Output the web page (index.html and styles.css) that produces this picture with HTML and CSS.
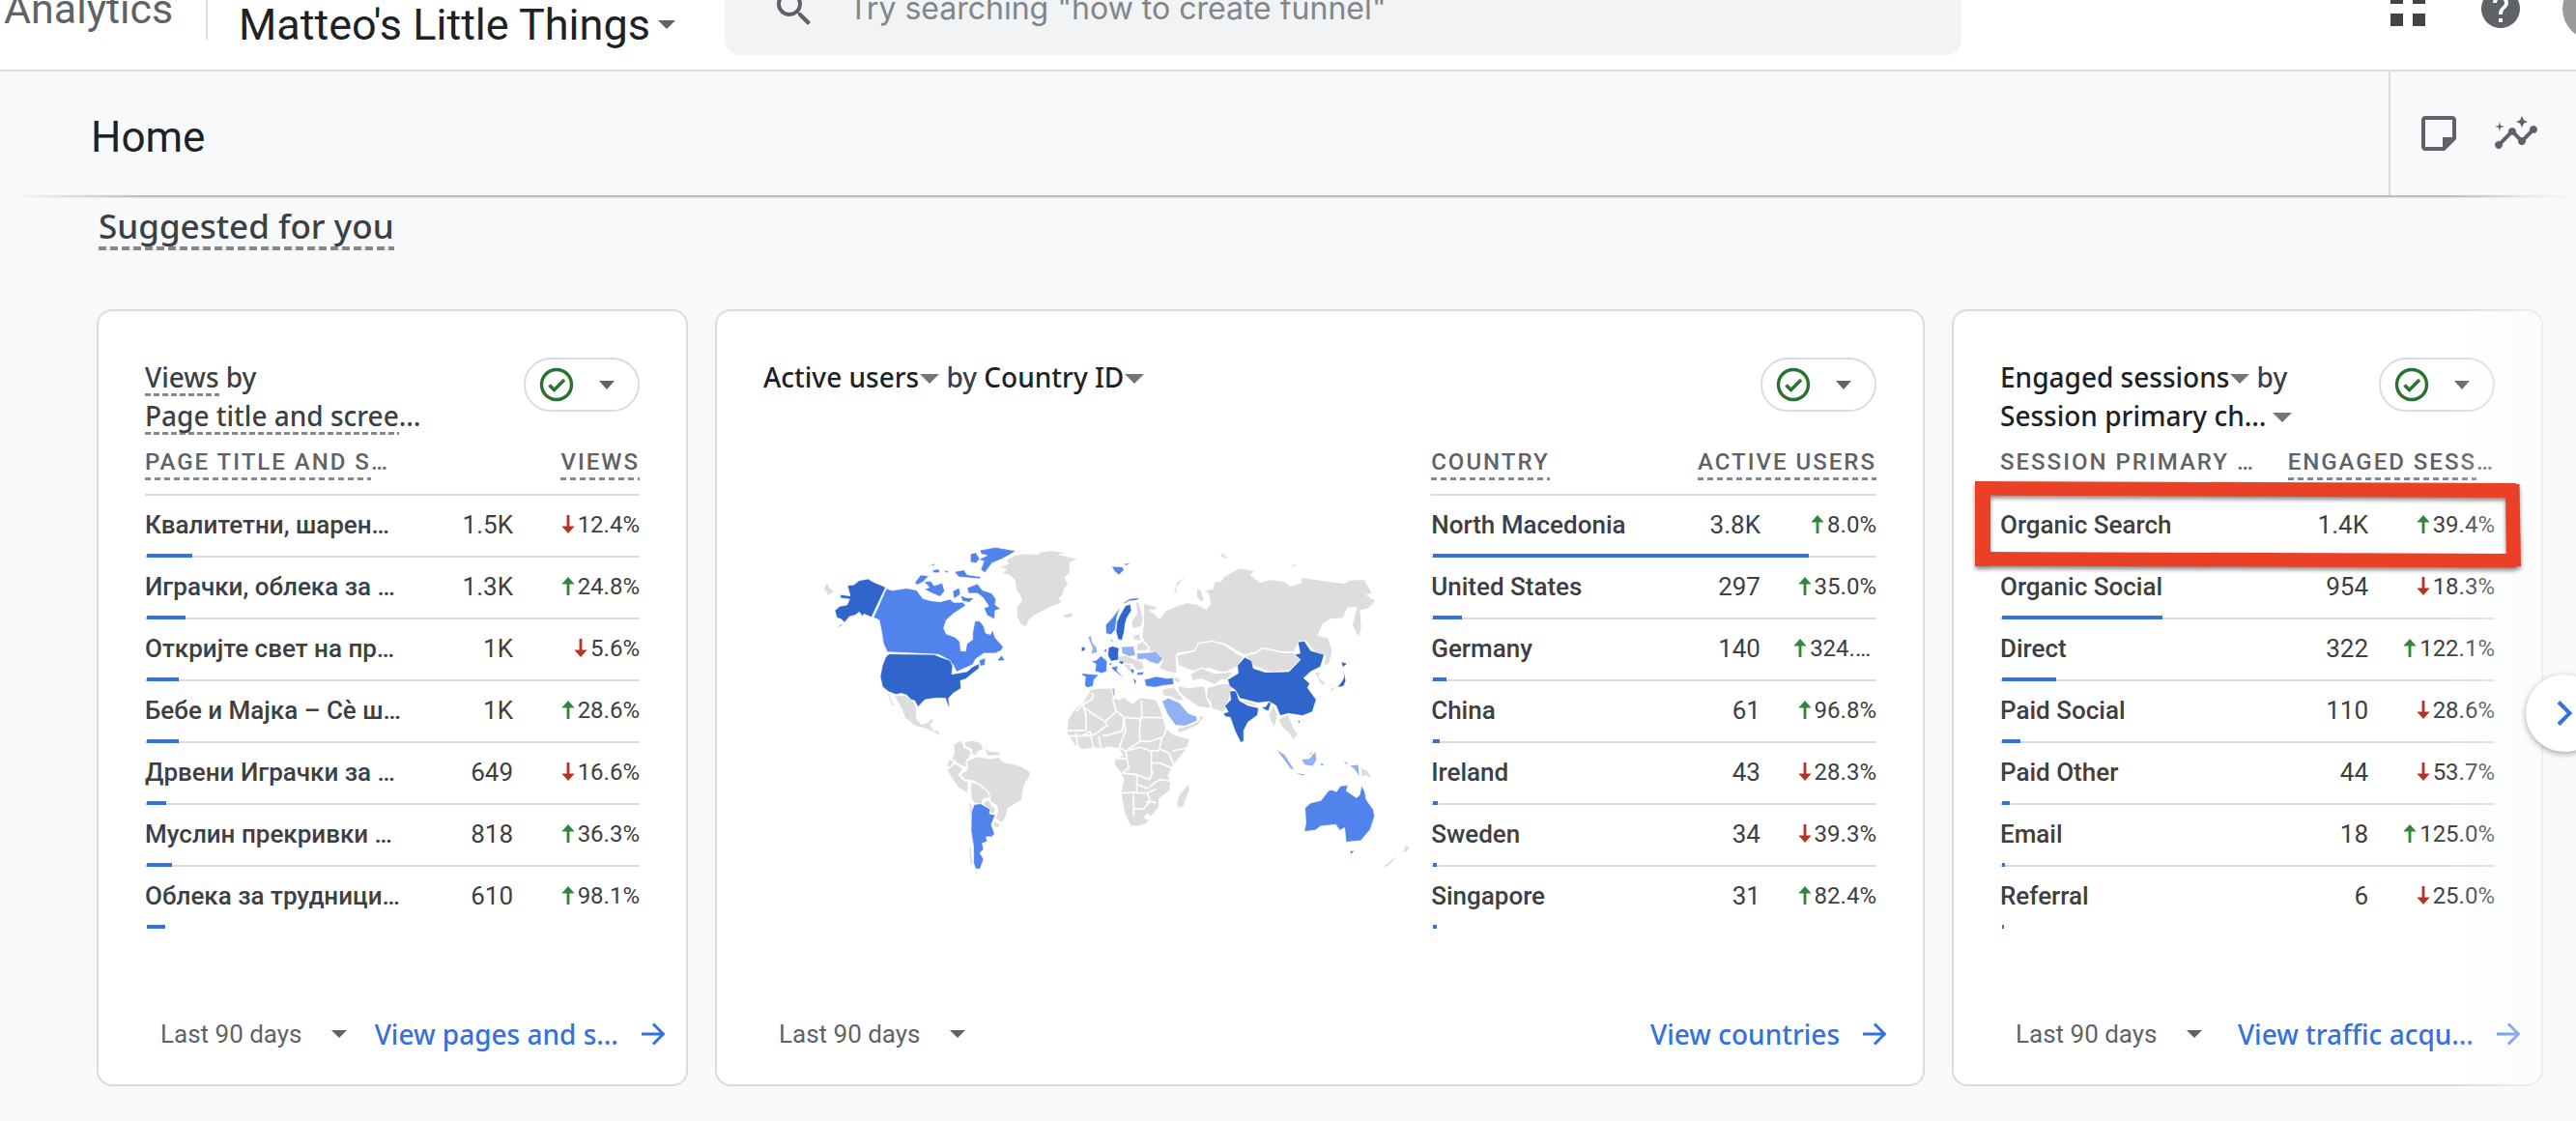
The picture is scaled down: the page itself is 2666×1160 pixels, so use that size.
FILE: index.html
```html
<!DOCTYPE html>
<html lang="en">
<head>
<meta charset="utf-8">
<title>Analytics | Home</title>
<link rel="stylesheet" href="styles.css">
</head>
<body>
<svg class="defs" aria-hidden="true">
  <symbol id="i-caret" viewBox="0 0 18 10" preserveAspectRatio="none"><path d="M0 0h18L9 10z"/></symbol>
  <symbol id="i-up" viewBox="0 0 14 20"><path d="M7 0l7 8H8.500v12h-3V8H0z"/></symbol>
  <symbol id="i-down" viewBox="0 0 14 20"><path d="M7 20l7-8H8.500V0h-3v12H0z"/></symbol>
  <symbol id="i-arrow" viewBox="0 0 24 24"><path d="M0 12h22M12 1.500L22.500 12 12 22.500" fill="none" stroke="currentColor" stroke-width="3"/></symbol>
  <symbol id="i-check" viewBox="0 0 36 36"><circle cx="18" cy="18" r="15.500" fill="none" stroke="currentColor" stroke-width="3.400"/><path d="M10.500 18.500l5 5L26 13" fill="none" stroke="currentColor" stroke-width="3.400"/></symbol>
</svg>

<header class="topbar">
  <a class="brand" href="#">Analytics</a>
  <button class="property" type="button">Matteo's Little Things<svg class="caret"><use href="#i-caret"/></svg></button>
  <form class="search" role="search">
    <svg class="icon" viewBox="0 0 24 24"><path d="M15.500 14h-.79l-.28-.27A6.470 6.470 0 0 0 16 9.500 6.500 6.500 0 1 0 9.500 16c1.610 0 3.090-.59 4.230-1.570l.27.28v.79l5 4.990L20.490 19l-4.990-5zm-6 0C7.010 14 5 11.990 5 9.500S7.010 5 9.500 5 14 7.010 14 9.500 11.990 14 9.500 14z"/></svg>
    <input type="text" aria-label="Search" placeholder='Try searching "how to create funnel"'>
  </form>
  <nav class="tools">
    <button type="button" aria-label="Apps"><svg class="apps" viewBox="0 0 36 36"><path d="M0 0h13v13H0zM23 0h13v13H23zM0 23h13v13H0zM23 23h13v13H23z"/></svg></button>
    <button type="button" aria-label="Help"><svg class="icon" viewBox="0 0 24 24"><path d="M12 2C6.480 2 2 6.480 2 12s4.480 10 10 10 10-4.480 10-10S17.520 2 12 2zm1 17h-2v-2h2v2zm2.070-7.750l-.9.920C13.450 12.900 13 13.500 13 15h-2v-.5c0-1.100.45-2.100 1.170-2.830l1.240-1.260c.37-.36.590-.86.590-1.410 0-1.100-.9-2-2-2s-2 .9-2 2H8c0-2.210 1.790-4 4-4s4 1.790 4 4c0 .88-.36 1.680-.93 2.250z"/></svg></button>
    <button class="avatar" type="button" aria-label="Account"></button>
  </nav>
</header>

<div class="subbar">
  <h1>Home</h1>
  <div class="subtools">
    <button type="button" aria-label="Notes"><svg class="icon" viewBox="0 0 24 24"><path d="M19 5v9h-5v5H5V5h14m0-2H5c-1.100 0-2 .9-2 2v14c0 1.100.9 2 2 2h10l6-6V5c0-1.100-.9-2-2-2z"/></svg></button>
    <button type="button" aria-label="Insights"><svg class="icon" viewBox="0 0 24 24"><path d="M21 8c-1.450 0-2.260 1.440-1.930 2.510l-3.550 3.560c-.3-.09-.74-.09-1.040 0l-2.550-2.550C12.270 10.450 11.460 9 10 9c-1.450 0-2.270 1.440-1.930 2.520l-4.560 4.550C2.440 15.740 1 16.550 1 18c0 1.100.9 2 2 2 1.450 0 2.260-1.440 1.930-2.510l4.550-4.560c.3.09.74.09 1.040 0l2.550 2.550C12.730 16.550 13.540 18 15 18c1.450 0 2.270-1.440 1.930-2.520l3.560-3.550C21.560 12.260 23 11.450 23 10c0-1.100-.9-2-2-2z"/><path d="M15 9l.94-2.070L18 6l-2.060-.93L15 3l-.92 2.070L12 6l2.080.93zM3.500 11L4 9l2-.5L4 8l-.5-2L3 8l-2 .5L3 9z"/></svg></button>
  </div>
</div>

<main>
  <h2><span class="dashed">Suggested for you</span></h2>
  <div class="cards">

    <section class="card">
      <div class="card-head">
        <h3><span class="dashed">Views</span> by<br><span class="dashed">Page title and scree</span>…</h3>
        <button class="status" type="button" aria-label="Data quality"><svg class="check"><use href="#i-check"/></svg><svg class="caret"><use href="#i-caret"/></svg></button>
      </div>
      <table>
        <thead><tr><th><span class="dashed">PAGE TITLE AND S</span>…</th><th colspan="2"><span class="dashed">VIEWS</span></th></tr></thead>
        <tbody>
          <tr><td>Квалитетни, шарен…<i class="bar" style="width:9.2%"></i></td><td>1.5K</td><td class="down"><svg><use href="#i-down"/></svg>12.4%</td></tr>
          <tr><td>Играчки, облека за …<i class="bar" style="width:7.8%"></i></td><td>1.3K</td><td class="up"><svg><use href="#i-up"/></svg>24.8%</td></tr>
          <tr><td>Откријте свет на пр…<i class="bar" style="width:6.4%"></i></td><td>1K</td><td class="down"><svg><use href="#i-down"/></svg>5.6%</td></tr>
          <tr><td>Бебе и Мајка – Сѐ ш…<i class="bar" style="width:6.4%"></i></td><td>1K</td><td class="up"><svg><use href="#i-up"/></svg>28.6%</td></tr>
          <tr><td>Дрвени Играчки за …<i class="bar" style="width:3.9%"></i></td><td>649</td><td class="down"><svg><use href="#i-down"/></svg>16.6%</td></tr>
          <tr><td>Муслин прекривки …<i class="bar" style="width:5.1%"></i></td><td>818</td><td class="up"><svg><use href="#i-up"/></svg>36.3%</td></tr>
          <tr><td>Облека за трудници…<i class="bar" style="width:3.7%"></i></td><td>610</td><td class="up"><svg><use href="#i-up"/></svg>98.1%</td></tr>
        </tbody>
      </table>
      <footer>
        <label class="range"><select aria-label="Date range"><option>Last 90 days</option></select><svg class="caret"><use href="#i-caret"/></svg></label>
        <a href="#">View pages and s…<svg><use href="#i-arrow"/></svg></a>
      </footer>
    </section>

    <section class="card wide">
      <div class="card-head">
        <h3><button type="button">Active users<svg class="caret"><use href="#i-caret"/></svg></button> by <button type="button">Country ID<svg class="caret"><use href="#i-caret"/></svg></button></h3>
        <button class="status" type="button" aria-label="Data quality"><svg class="check"><use href="#i-check"/></svg><svg class="caret"><use href="#i-caret"/></svg></button>
      </div>
      <div class="split">
        <svg class="map" viewBox="-120 0 2074 1140" role="img" aria-label="Active users by country">
          <g class="land">
            <path d="M66 208L78 185 88 205 102 215 96 220 82 232z"/>
            <path d="M610 140L640 130 632 118 665 102 690 98 735 100 738 93 780 88 825 97 800 101 860 115 833 127 832 158 818 172 828 195 815 208 812 225 798 240 812 246 795 258 770 265 745 280 720 292 705 305 697 328 680 320 668 297 665 265 682 245 675 225 665 215 660 180 640 165 615 160 635 150z"/>
            <path d="M808 283L815 287 835 280 845 290 828 300 812 297z"/>
            <path d="M285 540L320 538 345 553 355 575 357 612 372 628 390 622 398 612 413 614 400 630 410 648 425 645 430 668 412 655 388 645 378 641 350 634 320 610 308 580 295 558z"/>
            <path class="thin" d="M268 533l8 22 10 16"/>
            <path d="M470 690L495 677 505 700 525 712 522 730 510 745 512 765 490 755 465 738 472 715z"/>
            <path d="M505 682L530 678 555 685 565 705 545 715 548 725 528 722 525 705 506 698z"/>
            <path d="M565 700L585 712 612 713 620 727 600 727 575 728z"/>
            <path d="M455 738L475 742 460 764 450 758z"/>
            <path d="M450 770L475 750 502 766 488 785 500 800 517 806 515 845 485 825 465 797z"/>
            <path d="M512 740L548 728 580 735 613 730 625 745 650 750 680 758 708 775 710 785 690 820 682 865 640 890 632 922 618 936 600 920 608 900 605 882 585 870 580 848 560 820 535 806 505 800 490 785 512 770z"/>
            <path d="M522 808L545 812 575 835 585 855 563 862 558 876 535 875 525 860z"/>
            <path d="M563 868L580 862 590 880 605 895 592 908 570 890z"/>
            <path d="M595 925L615 938 612 950 595 948z"/>
            <path d="M518 860L530 883 524 920 524 1000 532 1070 558 1104 540 1092 522 1060 518 1020 523 980z"/>
          </g>
          <g class="c3"><path d="M535 878L555 875 585 893 582 906 600 910 588 940 598 968 590 978 572 978 575 993 560 998 564 1018 552 1028 564 1047 553 1078 540 1078 533 1060 533 1010 525 960 526 900z"/></g>
          <g class="c3">
            <path d="M262 207L280 213 325 206 356 212 375 238 400 245 430 248 460 240 470 250 500 250 508 260 470 285 448 305 440 330 448 348 475 358 490 372 493 400 508 402 512 378 530 366 530 345 537 308 552 308 565 325 570 345 585 350 592 335 600 360 625 388 618 400 600 408 565 408 540 425 530 443 480 466 470 445 455 428 425 412 265 404 253 378 248 345 240 305 222 297z"/>
            <path d="M553 448L550 430 570 422 568 445zM608 428l12-14 10 16-16 2z"/>
            <path d="M553 88L600 79 665 90 640 105 615 118 590 128 568 158 555 148 565 122 548 118 575 104 556 100z"/>
            <path d="M523 100L540 95 552 115 540 128 523 125z"/>
            <path d="M350 190L368 165 394 168 375 187 358 196z"/>
            <path d="M378 186L400 184 410 198 436 190 443 215 428 232 405 222 380 210 396 203z"/>
            <path d="M513 205L525 200 545 192 560 212 590 222 602 240 600 258 617 270 600 275 598 302 575 290 565 268 580 262 562 235 545 222 517 222z"/>
            <path d="M405 150l20-4 3 12-20 0zM392 138l22-10-4 8zM473 155l30-6 10 15 44 7-4 6-66-6zM468 215l20-10 4 20-20 14zM492 228l20 8 22 0-14 14-22-4zM440 150l15 2-6 8z"/>
          </g>
          <g class="c4">
            <path d="M141 197L160 196 178 182 205 177 222 187 260 203 216 296 192 286 188 294 178 280 165 290 148 294 132 312 122 302 108 298 102 275 118 262 140 258 148 240 118 236 120 226 150 230z"/>
            <path d="M106 328l24-14-10 10z"/>
            <path d="M270 410L410 412 438 423 460 430 468 448 465 473 512 465 530 450 550 440 550 455 530 470 508 488 492 493 494 517 470 532 455 548 459 580 450 562 446 548 420 547 395 550 382 552 360 575 350 555 338 552 325 538 310 533 290 536 268 527 250 512 243 480 250 445 260 420z"/>
          </g>
          <g transform="translate(810 0)">
            <g class="land">
              <path d="M250 252L290 262 295 272 270 275 285 285 300 300 320 275 350 262 385 250 415 255 430 262 445 270 458 255 452 225 440 212 465 208 470 185 490 185 500 170 520 158 550 143 598 152 585 165 612 187 645 178 690 185 705 198 738 190 740 172 800 180 830 185 875 190 890 180 938 178 950 200 962 222 945 228 974 245 950 270 925 276 928 330 920 362 898 322 912 265 885 268 870 300 830 303 808 318 793 352 825 360 838 400 828 440 810 450 815 415 785 410 755 370 735 370 718 405 680 405 620 392 600 405 565 415 500 378 460 372 420 378 410 400 356 408 352 430 355 472 320 465 298 455 312 425 270 402 262 385 245 360 250 320z"/>
              <path d="M343 215L355 185 397 162 370 185 353 205 357 225zM485 100l12-3 22 20-22-4zM704 135l16-5 14 4-20 6zM415 205l15 5 10 35-10 5-15-15z"/>
              <path d="M225 245L238 252 250 300 245 325 215 332 212 308 230 285z"/>
              <path d="M216 352l24-6 4 24-22-2z"/>
              <path d="M230 380L248 370 268 390 260 400 228 400z"/>
              <path d="M170 418l20-6 30 12 28 10 6 22-22 8-18-22-20 0-20-10z"/>
              <path d="M188 440l22 4 8 22-8 4-20-22z"/>
              <path d="M352 415L410 400 420 378 462 370 500 380 540 408 562 418 545 450 500 470 455 455 415 465 385 458 360 447z"/>
              <path d="M395 472L430 453 470 470 530 465 512 490 490 492 470 507 430 488 402 495z"/>
              <path d="M343 480l20 4 2 20-18-10z"/>
              <path d="M355 508L390 515 440 508 448 545 462 580 420 575 385 550 360 530z"/>
              <path d="M308 520L345 512 378 555 355 555 340 545 310 540z"/>
              <path d="M448 515L490 503 530 500 520 545 500 592 462 580 458 560 445 545z"/>
              <path d="M353 640L392 632 425 615 420 600 440 605 420 632 360 658z"/>
              <path d="M563 415L600 408 620 392 680 405 715 406 738 428 705 462 645 467 590 447z"/>
              <path d="M782 468l18-4-3 20 14 10 6 18-18-10z"/>
              <path d="M638 600L655 568 668 600 658 642 645 620z"/>
              <path d="M668 612L700 598 718 640 732 660 715 678 700 655 680 638z"/>
              <path d="M560 552l42 14 0 8-42-12z"/>
              <path d="M690 706l12 6 2 14zM753 730l28-26-6 20zM798 628l6 12-4 6zM825 688l6-4 0 12zM570 686l5 4-1 8z"/>
              <path d="M925 762L948 772 963 802 945 790 926 792z"/>
              <path d="M85 522L100 517 150 515 158 545 175 552 190 543 215 563 240 545 290 552 303 578 322 642 345 660 395 675 385 705 345 755 328 785 335 810 333 835 300 860 300 885 280 908 260 938 235 945 210 945 192 908 180 845 188 800 180 780 160 755 162 735 185 725 175 705 140 700 120 705 100 702 60 708 35 692 12 655 15 615 35 582 62 560z"/>
              <path d="M390 812L395 830 375 885 358 890 353 870 362 845z"/>
              <path class="solid" d="M998 1068L1040 1035 1020 1058 1004 1072zM1058 1022l8-18 10 8-12 14z"/>
            </g>
            <path class="borders" d="M93 530L92 550 62 567 40 590M62 567L72 600 72 648 15 648M62 575L130 620 138 632 100 660 62 665M155 545L165 590 132 620M163 585L190 607 185 650 130 665 122 660M190 607L245 612 245 555M245 607L315 608M242 612L238 655 240 682 195 712 175 700M190 607L195 650 175 700M238 680L270 682 312 668 322 642M308 668L300 705 330 718 345 755M340 712L392 700M300 710L275 712 240 700 195 712M195 712L205 765 185 780M165 735l35 0M275 712L275 780M185 780L230 785 270 800 280 775M275 748L305 750 340 765M230 785L230 840 180 842M230 815L262 828 300 800 335 805M220 845L220 915M230 842L262 842 290 830M258 870L272 868 290 872M220 890L250 892 272 868M262 842l10 26M40 655L48 700M60 665L85 650 95 705M112 665L118 705M15 665l45 0"/>
            <circle class="hole" cx="263" cy="916" r="9"/>
            <g class="c4">
              <path d="M195 260L210 256 213 275 198 300 193 320 191 340 184 368 172 365 165 340 168 310 180 285z"/>
              <path d="M142 390L155 386 175 392 172 410 174 428 150 433 140 415zM128 398l10-4-5 14z"/>
              <path d="M58 388l12 2-2 10-10 2zM174 433l16-2-4 12-10-4zM208 455l14 5-4 14zM218 486l10 6-2 18zM142 439l12 0-6 8z"/>
              <path d="M512 490L545 470 542 447 565 420 587 432 592 455 630 467 702 465 738 428 720 412 737 408 730 373 750 370 770 400 812 412 800 450 770 465 748 485 767 502 760 515 787 552 775 590 745 602 700 595 675 602 662 570 640 558 605 562 550 548 535 522 518 510z"/>
              <path d="M518 525L538 525 548 555 575 570 608 578 605 600 575 622 562 648 562 680 553 686 535 650 520 607 505 605 498 595 514 590 503 572 522 552zM617 577l14-4 8-14 8 4-8 24-8-2z"/>
              <path class="solid" d="M730 618l6 0-2 6zM866 436l16 4-12 10zM872 463l6 30-6 16-18 5 14-20 6-10zM832 524l18-14-14 12z"/>
            </g>
            <g class="c3">
              <path d="M178 265L168 295 163 335 150 350 134 347 133 320 152 300zM190 250l20-12 32-2-14 8-22 2-14 8zM152 138l34 2 4 10-16 15-14-12zM188 130l24-2-16 8z"/>
              <path d="M88 432L104 430 118 416 138 432 136 465 120 470 100 464 103 442z"/>
              <path d="M60 470L112 475 97 490 94 510 76 515 68 508 70 480 60 478z"/>
              <path d="M148 452L172 447 168 462 192 487 182 480 162 464z"/>
              <path d="M230 468l24-3-6 10-16 2zM148 366l6-2 0 12z"/>
              <path d="M253 490L290 480 325 486 342 484 345 505 315 508 285 514 258 510z"/>
              <path d="M750 962L755 935 752 888 770 873 802 865 825 835 835 832 850 838 862 820 886 818 880 835 912 857 922 848 928 818 938 838 942 862 965 895 968 915 955 955 925 990 900 992 880 995 875 950 860 958 848 940 800 945 785 957z"/>
              <path d="M892 1022l14-2-12 14z"/>
            </g>
            <g class="c2">
              <path d="M78 358L88 353 92 375 105 390 107 406 87 410 92 392z"/>
              <path d="M182 388L220 386 226 415 205 418 184 408z"/>
              <path d="M230 408L265 406 288 402 312 425 295 442 270 435 258 426 230 428z"/>
              <path d="M153 517l8 0 0 20 4 8-10-8z"/>
              <path d="M308 557L328 547 362 562 390 595 415 604 417 598 417 618 380 634 350 632 325 598z"/>
              <path class="solid" d="M665 708L690 725 718 770 707 766 690 742zM742 738l24-2 18-22 4 24-12 20-24-4zM893 757l24-2 4 34-16-22zM800 748l12 6-10 4zM725 780l30 5-14 2zM872 744l14 4-6 4z"/>
            </g>
          </g>
        </svg>
        <table>
          <thead><tr><th><span class="dashed">COUNTRY</span></th><th colspan="2"><span class="dashed">ACTIVE USERS</span></th></tr></thead>
          <tbody>
            <tr><td>North Macedonia<i class="bar" style="width:84.3%"></i></td><td>3.8K</td><td class="up"><svg><use href="#i-up"/></svg>8.0%</td></tr>
            <tr><td>United States<i class="bar" style="width:6.5%"></i></td><td>297</td><td class="up"><svg><use href="#i-up"/></svg>35.0%</td></tr>
            <tr><td>Germany<i class="bar" style="width:3.1%"></i></td><td>140</td><td class="up clipped"><svg><use href="#i-up"/></svg>324.…</td></tr>
            <tr><td>China<i class="bar" style="width:1.5%"></i></td><td>61</td><td class="up"><svg><use href="#i-up"/></svg>96.8%</td></tr>
            <tr><td>Ireland<i class="bar" style="width:1.1%"></i></td><td>43</td><td class="down"><svg><use href="#i-down"/></svg>28.3%</td></tr>
            <tr><td>Sweden<i class="bar" style="width:0.9%"></i></td><td>34</td><td class="down"><svg><use href="#i-down"/></svg>39.3%</td></tr>
            <tr><td>Singapore<i class="bar" style="width:0.9%"></i></td><td>31</td><td class="up"><svg><use href="#i-up"/></svg>82.4%</td></tr>
          </tbody>
        </table>
      </div>
      <footer>
        <label class="range"><select aria-label="Date range"><option>Last 90 days</option></select><svg class="caret"><use href="#i-caret"/></svg></label>
        <a href="#">View countries<svg><use href="#i-arrow"/></svg></a>
      </footer>
    </section>

    <section class="card">
      <div class="card-head">
        <h3><button type="button">Engaged sessions<svg class="caret"><use href="#i-caret"/></svg></button> by<br><button type="button">Session primary ch…<svg class="caret apart"><use href="#i-caret"/></svg></button></h3>
        <button class="status" type="button" aria-label="Data quality"><svg class="check"><use href="#i-check"/></svg><svg class="caret"><use href="#i-caret"/></svg></button>
      </div>
      <table>
        <thead><tr><th>SESSION PRIMARY …</th><th colspan="2"><span class="dashed">ENGAGED SESS</span>…</th></tr></thead>
        <tbody>
          <tr><td>Organic Search<i class="bar" style="width:48%"></i></td><td>1.4K</td><td class="up"><svg><use href="#i-up"/></svg>39.4%</td></tr>
          <tr><td>Organic Social<i class="bar" style="width:32.5%"></i></td><td>954</td><td class="down"><svg><use href="#i-down"/></svg>18.3%</td></tr>
          <tr><td>Direct<i class="bar" style="width:11%"></i></td><td>322</td><td class="up"><svg><use href="#i-up"/></svg>122.1%</td></tr>
          <tr><td>Paid Social<i class="bar" style="width:3.7%"></i></td><td>110</td><td class="down"><svg><use href="#i-down"/></svg>28.6%</td></tr>
          <tr><td>Paid Other<i class="bar" style="width:1.6%"></i></td><td>44</td><td class="down"><svg><use href="#i-down"/></svg>53.7%</td></tr>
          <tr><td>Email<i class="bar" style="width:0.6%"></i></td><td>18</td><td class="up"><svg><use href="#i-up"/></svg>125.0%</td></tr>
          <tr><td>Referral<i class="bar" style="width:0.3%"></i></td><td>6</td><td class="down"><svg><use href="#i-down"/></svg>25.0%</td></tr>
        </tbody>
      </table>
      <footer>
        <label class="range"><select aria-label="Date range"><option>Last 90 days</option></select><svg class="caret"><use href="#i-caret"/></svg></label>
        <a href="#">View traffic acqu…<svg><use href="#i-arrow"/></svg></a>
      </footer>
    </section>
  </div>
  <div class="fade"></div>
  <svg class="callout" viewBox="0 0 566 92" aria-hidden="true">
    <path d="M0 0L16 0V88H0z"/>
    <path d="M0 0L560 2V17L0 14.500z"/>
    <path d="M0 73L560 75V89.500L0 87.500z"/>
    <path d="M549 3H563.500L565 88H550z"/>
  </svg>
  <button class="next" type="button" aria-label="Next"><svg viewBox="0 0 16 26"><path d="M2 1.500L13.500 13 2 24.500" fill="none" stroke="currentColor" stroke-width="4"/></svg></button>
</main>
</body>
</html>
```
FILE: styles.css
```css
* { box-sizing: border-box; }
body {
  margin: 0;
  background: #f8f9fb;
  color: #3c4043;
  font-family: Roboto, "Liberation Sans", sans-serif;
  font-size: 26px;
  overflow-x: hidden;
}
h1, h2, h3 { margin: 0; font-weight: 400; }
button { border: 0; padding: 0; background: none; font: inherit; color: inherit; }
svg { fill: currentColor; display: block; }
a { text-decoration: none; }
.defs { position: absolute; width: 0; height: 0; }
.icon { width: 48px; height: 48px; }
.caret { width: 18px; height: 9px; }

.dashed {
  padding-bottom: 1px;
  background: repeating-linear-gradient(90deg, #85898e 0 6px, transparent 6px 9px) left bottom / 100% 3px no-repeat;
}

/* Top bar, scrolled partly out of view */
.topbar {
  display: flex;
  align-items: center;
  height: 128px;
  margin-top: -54px;
  background: #fff;
  border-bottom: 2px solid #dadce0;
  overflow: hidden;
}
.brand {
  width: 215px;
  padding-left: 4px;
  line-height: 64px;
  font-size: 43px;
  color: #5f6368;
  border-right: 2px solid #dadce0;
}
.property {
  display: flex;
  align-items: center;
  gap: 8px;
  width: 535px;
  padding: 32px 0 0 32px;
  font-size: 45px;
  color: #202124;
  white-space: nowrap;
}
.property .caret { color: #5f6368; }
.search {
  display: flex;
  align-items: center;
  gap: 32px;
  width: 48%;
  height: 96px;
  padding: 0 48px;
  border-radius: 16px;
  background: #f1f3f4;
  color: #5f6368;
}
.search input {
  flex: 1;
  border: 0;
  padding: 0;
  background: none;
  font: 400 32px/48px Inter, "Liberation Sans", sans-serif;
}
.search input::placeholder { color: #80868b; opacity: 1; }
.tools {
  display: flex;
  align-items: center;
  gap: 54px;
  margin: 0 -50px 0 auto;
  color: #5f6368;
}
.apps { width: 36px; height: 36px; color: #444; }
.avatar {
  width: 64px;
  height: 64px;
  margin-left: -14px;
  border-radius: 50%;
  background: #9b9b9b;
}

.subbar {
  position: relative;
  display: flex;
  justify-content: space-between;
  height: 128px;
}
.subbar::after {
  content: "";
  position: absolute;
  inset: auto 0 -3px;
  height: 3px;
  background: linear-gradient(#b5b8b9, #c6c8ca 60%, #eceef0);
  mask-image: linear-gradient(90deg, transparent 12px, #000 140px calc(100% - 90px), rgba(0, 0, 0, .25));
}
.subbar h1 {
  padding: 4px 0 0 94px;
  line-height: 128px;
  font-size: 44px;
  color: #202124;
}
.subtools {
  display: flex;
  align-items: center;
  gap: 32px;
  padding: 0 38px 0 26px;
  border-left: 2px solid #dadce0;
  color: #5f6368;
}

main { position: relative; padding: 8px 34px 36px 100px; }
h2 {
  padding-left: 2px;
  font: 500 35px/48px "Noto Sans", "Liberation Sans", sans-serif;
}
h2 .dashed {
  display: inline-block;
  background: repeating-linear-gradient(90deg, #85898e 0 8px, transparent 8px 12px) left bottom / 100% 4px no-repeat;
}

.cards {
  display: grid;
  grid-template-columns: repeat(4, 1fr);
  gap: 28px;
  margin-top: 61px;
}
.card {
  display: flex;
  flex-direction: column;
  min-height: 804px;
  padding: 48px 48px 28px;
  background: #fff;
  border: 2px solid #dadce0;
  border-radius: 16px;
}
.wide { grid-column: span 2; }
.card-head {
  display: flex;
  justify-content: space-between;
  align-items: flex-start;
  height: 80px;
}
h3 {
  font: 500 28px/40px "Noto Sans", "Liberation Sans", sans-serif;
  white-space: nowrap;
}
h3 button { color: #202124; }
h3 .caret { display: inline-block; width: 20px; height: 10px; margin-left: 1px; vertical-align: 4px; color: #757575; }
h3 .apart { margin-left: 7px; }
.status {
  display: flex;
  align-items: center;
  gap: 26px;
  width: 120px;
  height: 56px;
  padding-left: 14px;
  border: 2px solid #dadce0;
  border-radius: 28px;
  color: #5f6368;
}
.status .caret { width: 16px; }
.check { width: 36px; height: 36px; color: #2a7230; }

.split { display: grid; grid-template-columns: 3fr 2fr; align-items: start; }
.map { width: 100%; padding-top: 90px; }
.map path { stroke: #fff; stroke-width: 4; stroke-linejoin: round; }
.map .land { fill: #ddd; }
.map .c2 { fill: #91b1f2; }
.map .c3 { fill: #5183ec; }
.map .c4 { fill: #3065cb; }
.map .c2 path, .map .c3 path, .map .c4 path { stroke-width: 2; }
.map .borders { fill: none; stroke-width: 5; }
.map .hole { fill: #fff; }
.map .thin { fill: none; stroke: #ddd; }
.map path.solid { stroke: none; }

table { width: 100%; border-collapse: separate; border-spacing: 0; }
th {
  height: 63px;
  padding: 12px 0 0;
  border-bottom: 2px solid #dadce0;
  vertical-align: top;
  text-align: left;
  font-size: 24px;
  line-height: 32px;
  font-weight: 500;
  letter-spacing: 2px;
  color: #5f6368;
  white-space: nowrap;
}
th .dashed {
  display: inline-block;
  padding-bottom: 3px;
  background: repeating-linear-gradient(90deg, #85898e 0 6px, transparent 6px 10px) left bottom / 100% 3px no-repeat;
}
th + th { text-align: right; }
tbody tr { position: relative; }
td {
  height: 64px;
  padding: 0 0 2px;
  border-bottom: 2px solid #dadce0;
  text-align: right;
  white-space: nowrap;
}
tbody tr:last-child td { border-bottom-color: transparent; }
td:first-child { text-align: left; font-weight: 500; }
td:last-child { width: 131px; font-size: 24px; }
.wide td:last-child { width: 120px; }
td.clipped { padding-right: 6px; }
td svg { display: inline-block; width: 14px; height: 19px; margin-right: 3px; vertical-align: -1px; }
.up svg { color: #34853c; }
.down svg { color: #b93228; }
.bar {
  position: absolute;
  left: 2px;
  bottom: 0;
  height: 4px;
  background: #3570e0;
}

footer {
  display: flex;
  justify-content: space-between;
  align-items: center;
  margin: auto -26px 0 16px;
  height: 48px;
}
.wide footer { margin-right: -10px; }
.range { display: flex; align-items: center; gap: 30px; color: #5f6368; }
.range select {
  appearance: none;
  border: 0;
  padding: 0;
  background: none;
  font: inherit;
  color: inherit;
}
.range .caret { width: 16px; height: 8px; }
footer a {
  display: flex;
  align-items: center;
  gap: 24px;
  color: #3570e0;
  font: 500 28px/48px "Noto Sans", "Liberation Sans", sans-serif;
  white-space: nowrap;
}
footer a svg { width: 24px; height: 24px; }

.callout {
  position: absolute;
  right: 56px;
  top: 296px;
  width: 566px;
  color: #ea4025;
  filter: drop-shadow(0 3px 2px rgba(0, 0, 0, .45));
}

.fade {
  position: absolute;
  inset: 0 0 0 auto;
  width: 130px;
  background: linear-gradient(90deg, rgba(248, 249, 251, 0), rgba(248, 249, 251, .85));
  pointer-events: none;
}
.next {
  position: absolute;
  top: 496px;
  right: -28px;
  display: flex;
  align-items: center;
  width: 80px;
  height: 80px;
  padding-left: 32px;
  border-radius: 50%;
  background: #fff;
  color: #3570e0;
  box-shadow: 0 2px 6px rgba(0, 0, 0, .35);
}
.next svg { width: 16px; height: 26px; }
```
